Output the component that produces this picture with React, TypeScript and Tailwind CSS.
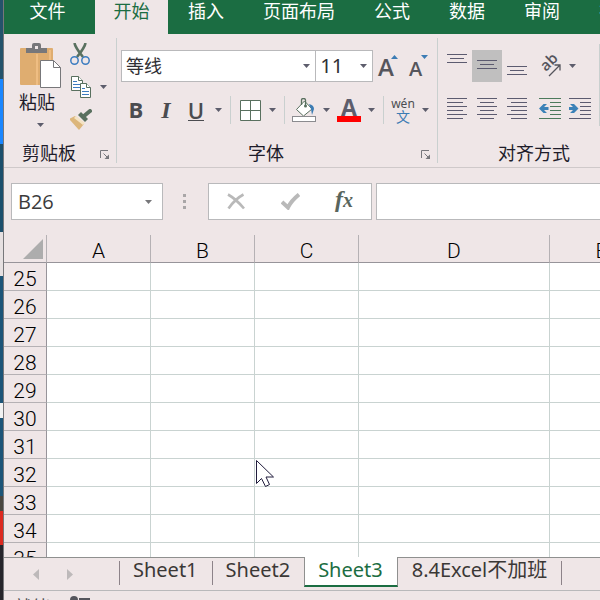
import React from "react";
import clsx from "clsx";

const MENU_TABS = ["文件", "开始", "插入", "页面布局", "公式", "数据", "审阅", "视图"];
const ACTIVE_MENU = "开始";

const COLUMNS = ["A", "B", "C", "D", "E"];
const ROWS = [25, 26, 27, 28, 29, 30, 31, 32, 33, 34, 35];

const SHEETS = ["Sheet1", "Sheet2", "Sheet3", "8.4Excel不加班"];
const ACTIVE_SHEET = "Sheet3";

const Caret: React.FC<{ className?: string }> = ({ className }) => (
  <svg width="7" height="4" viewBox="0 0 7 4" className={clsx("shrink-0", className ?? "text-[#5d5d6c]")}>
    <path d="M0 0h7L3.5 4z" fill="currentColor" />
  </svg>
);

const CaretButton: React.FC<{ label: string }> = ({ label }) => (
  <button type="button" aria-label={label} className="flex h-8 w-[15px] items-center justify-center">
    <Caret />
  </button>
);

type ToolButtonProps = {
  label: string;
  active?: boolean;
  className?: string;
  children: React.ReactNode;
};

const ToolButton: React.FC<ToolButtonProps> = ({ label, active, className, children }) => (
  <button
    type="button"
    aria-label={label}
    className={clsx(
      "flex h-8 w-[30px] shrink-0 items-center justify-center text-[#4b4c50]",
      active && "bg-[#c0bfbf]",
      className
    )}
  >
    {children}
  </button>
);

const Separator = () => <div className="mx-1 h-7 w-px shrink-0 bg-[#c9d0cf]" />;

const GroupFooter: React.FC<{ title: string }> = ({ title }) => (
  <div className="flex h-5 items-center">
    <span className="flex-1 pb-0.5 text-center text-lg leading-5 text-[#1e1c2a]">{title}</span>
    <button type="button" aria-label={`${title}设置`} className="flex w-[22px] justify-center pt-1">
      <svg width="10" height="10" viewBox="0 0 10 10" fill="none" stroke="#77777c">
        <path d="M.5 8V.5H8M3.5 3.5l4 4" />
        <path d="M9 4.500V9H4.500z" fill="#77777c" stroke="none" />
      </svg>
    </button>
  </div>
);

/* each line is [x, y, width] */
const LinesIcon: React.FC<{ lines: number[][] }> = ({ lines }) => (
  <svg width="20" height="32" viewBox="0 0 20 32" fill="#5c5b70">
    {lines.map(([x, y, w]) => (
      <rect key={y} x={x} y={y} width={w} height="1" />
    ))}
  </svg>
);

const VERTICAL_ALIGN = [
  { label: "顶端对齐", top: 4 },
  { label: "垂直居中", top: 10 },
  { label: "底端对齐", top: 16 },
];

const HORIZONTAL_ALIGN = [
  { label: "左对齐", short: 0 },
  { label: "居中", short: 3 },
  { label: "右对齐", short: 4 },
];

const IndentIcon: React.FC<{ increase?: boolean }> = ({ increase }) => (
  <svg width="22" height="32" viewBox="0 0 22 32" fill={increase ? "#5c5b70" : "#4d7a5c"}>
    <path d="M0 4h22v1H0zM11 8h11v1H11zM11 12h11v1H11zM11 16h11v1H11zM11 20h11v1H11zM0 24h22v1H0z" />
    {increase ? (
      <path d="M0 13h4L1 10h4l4.500 4.500L5 19H1l3-3H0z" fill="#3c82b8" />
    ) : (
      <path d="M9.500 13H5l3-3H4.500L0 14.500 4.500 19H8l-3-3h4.500z" fill="#3c82b8" />
    )}
  </svg>
);

const MenuTabs = () => (
  <nav className="flex h-[34px] shrink-0 overflow-hidden bg-[#1b6d42]">
    {MENU_TABS.map((tab, index) => (
      <button
        key={tab}
        type="button"
        className={clsx(
          "shrink-0 whitespace-nowrap pb-3.5 text-lg leading-5",
          index === 0 && "w-[91px] pr-1",
          index === 1 && "w-[73px]",
          index > 1 && "pl-5 pr-[19px]",
          tab === ACTIVE_MENU ? "bg-[#efe6e7] text-[#1b6d42]" : "text-white"
        )}
      >
        {tab}
      </button>
    ))}
  </nav>
);

const ClipboardGroup = () => (
  <section className="flex w-[113px] shrink-0 flex-col justify-between border-r border-[#c9d0cf]">
    <div className="flex pl-[15px] pt-[5px]">
      <button type="button" className="flex w-[43px] flex-col items-start text-lg leading-5 text-[#1e1c2a]">
        <svg width="43" height="46" viewBox="0 0 43 46">
          <rect x="1" y="5" width="33" height="37" rx="1" fill="#dfad70" />
          <path d="M17 11h2v31h-2zM30 7h2v10h-2z" fill="#efbd82" />
          <path d="M7 10V5h6V2q0-2 2-2h5q2 0 2 2v3h6v5z" fill="#77777a" />
          <rect x="16" y="3" width="3" height="3" fill="#efe6e7" />
          <path d="M21.500 17.500h13l7 7v20h-20z" fill="#fff" stroke="#77777a" />
          <path d="M34.500 17.500v7h7" fill="none" stroke="#77777a" />
        </svg>
        <span className="mt-0.5">粘贴</span>
        <span className="flex w-full justify-center pt-3">
          <Caret />
        </span>
      </button>
      <div className="ml-2 flex flex-col gap-[11px]">
        <button type="button" aria-label="剪切">
          <svg width="22" height="22" viewBox="0 0 22 22" fill="none">
            <path d="M4.500 0Q5 4 13 14M15.500 0Q15 4 7 14" stroke="#59705f" strokeWidth="2.600" />
            <circle cx="4.500" cy="17.500" r="3.700" stroke="#3c7cc0" strokeWidth="1.500" />
            <circle cx="15.500" cy="17.500" r="3.700" stroke="#3c7cc0" strokeWidth="1.500" />
          </svg>
        </button>
        <button type="button" aria-label="复制" className="flex items-center gap-2">
          <svg width="22" height="22" viewBox="0 0 22 22" fill="#fff" stroke="#59705f">
            <path d="M1.500.5h7l4 4v10h-11z" />
            <path d="M8.500.5v4h4" />
            <path d="M3 5.500h4M3 8.500h7M3 11.500h7" stroke="#3c7cc0" />
            <path d="M10.500 7.500h6l4 4v10h-10z" />
            <path d="M16.500 7.500v4h4" />
            <path d="M12 12.500h3M12 15.500h7M12 18.500h7" stroke="#3c7cc0" />
          </svg>
          <Caret />
        </button>
        <button type="button" aria-label="格式刷">
          <svg width="22" height="22" viewBox="0 0 22 22">
            <path d="M-1 10l6-3 9 8-5 6z" fill="#dcb67b" />
            <path d="M6 7l9 7-2 2-9-7z" fill="#f4e3c4" />
            <path d="M8 6l3-3 7 7-3 3z" fill="#59705f" />
            <path d="M14 7l6-5" stroke="#59705f" strokeWidth="4" strokeLinecap="round" />
          </svg>
        </button>
      </div>
    </div>
    <GroupFooter title="剪贴板" />
  </section>
);

const FontGroup = () => (
  <section className="flex w-[321px] shrink-0 flex-col justify-between border-r border-[#c9d0cf]">
    <div className="px-1 pt-3">
      <div className="flex h-8">
        <div className="relative w-[196px]">
          <select
            aria-label="字体"
            className="h-full w-full appearance-none border border-[#b9b9bb] bg-white pb-0.5 pl-1 text-lg leading-5 text-[#2f2f33]"
          >
            <option>等线</option>
          </select>
          <span className="pointer-events-none absolute inset-y-0 right-1.5 flex items-center">
            <Caret />
          </span>
        </div>
        <div className="relative -ml-px w-[58px]">
          <select
            aria-label="字号"
            className="h-full w-full appearance-none border border-[#b9b9bb] bg-white pl-1 font-['Noto_Sans'] text-xl leading-5 text-[#2f2f33]"
          >
            <option>11</option>
          </select>
          <span className="pointer-events-none absolute inset-y-0 right-1.5 flex items-center">
            <Caret />
          </span>
        </div>
        <ToolButton label="增大字号">
          <svg width="22" height="32" viewBox="0 0 22 32" className="font-['Open_Sans'] font-semibold">
            <text x="1" y="26" fontSize="24" fill="#55555c">A</text>
            <path d="M14 9l3.500-4L21 9z" fill="#3c7cb4" />
          </svg>
        </ToolButton>
        <ToolButton label="减小字号">
          <svg width="22" height="32" viewBox="0 0 22 32" className="font-['Open_Sans'] font-semibold">
            <text x="2" y="26" fontSize="20" fill="#55555c">A</text>
            <path d="M14 5h7l-3.500 4z" fill="#3c7cb4" />
          </svg>
        </ToolButton>
      </div>
      <div className="mt-3 flex items-center">
        <ToolButton label="加粗">
          <span className="pb-0.5 font-['Open_Sans'] text-[22px] font-bold leading-8">B</span>
        </ToolButton>
        <ToolButton label="倾斜">
          <span className="font-['Liberation_Serif'] text-2xl font-bold italic leading-8">I</span>
        </ToolButton>
        <ToolButton label="下划线">
          <span className="border-b border-[#4b4c50] font-['Open_Sans'] text-[22px] font-semibold leading-5">U</span>
        </ToolButton>
        <CaretButton label="下划线选项" />
        <Separator />
        <ToolButton label="边框">
          <svg width="21" height="21" viewBox="0 0 21 21" fill="#fff" stroke="#59705f">
            <path d="M.5.5h20v20H.5zM10.500.5v20M.5 10.500h20" />
          </svg>
        </ToolButton>
        <CaretButton label="边框选项" />
        <Separator />
        <ToolButton label="填充颜色">
          <svg width="24" height="24" viewBox="0 0 24 24" fill="none">
            <path d="M4.500 11.500L12.500 3l7.500 8-8.500 7z" fill="#fff" stroke="#59705f" />
            <path d="M9.500 7V2q0-1.500 2-1.500t2 1.500v6" stroke="#59705f" strokeWidth="1.300" />
            <circle cx="13.500" cy="8" r="1.500" fill="#59705f" />
            <path d="M17 6q5 1 5 5l-2 6-1-6z" fill="#3c7cb4" />
            <rect x=".5" y="18.500" width="23" height="5" fill="#fff" stroke="#8b8b8f" />
          </svg>
        </ToolButton>
        <CaretButton label="填充颜色选项" />
        <ToolButton label="字体颜色">
          <svg width="24" height="24" viewBox="0 0 24 24" className="font-['Open_Sans'] font-bold">
            <text x="12" y="18" fontSize="23" textAnchor="middle" fill="#5d5d6c">A</text>
            <rect y="18" width="24" height="6" fill="#f00" />
          </svg>
        </ToolButton>
        <CaretButton label="字体颜色选项" />
        <Separator />
        <ToolButton label="拼音" className="flex-col">
          <span className="font-['Noto_Sans'] text-xs leading-[13px]">wén</span>
          <span className="text-sm leading-[13px] text-[#3c7cb4]">文</span>
        </ToolButton>
        <CaretButton label="拼音选项" />
      </div>
    </div>
    <GroupFooter title="字体" />
  </section>
);

const AlignGroup = () => (
  <section className="flex w-[214px] shrink-0 flex-col justify-between">
    <div className="flex pl-1">
      <div className="pt-3">
        <div className="flex items-center">
          {VERTICAL_ALIGN.map(({ label, top }) => (
            <ToolButton key={label} label={label} active={top === 10}>
              <LinesIcon lines={[[0, top, 20], [3, top + 4, 14], [0, top + 8, 20]]} />
            </ToolButton>
          ))}
          <ToolButton label="方向" className="ml-[3px]">
            <svg width="22" height="22" viewBox="0 0 22 22" className="font-['Open_Sans'] font-semibold">
              <text transform="translate(7 17) rotate(-45)" fontSize="15" fill="#55555c">ab</text>
              <path d="M10 21L20.500 10.500M15.500 10h5.500v5.500" fill="none" stroke="#55555c" strokeWidth="1.300" />
            </svg>
          </ToolButton>
          <CaretButton label="方向选项" />
        </div>
        <div className="mt-3 flex items-center">
          {HORIZONTAL_ALIGN.map(({ label, short }) => (
            <ToolButton key={label} label={label}>
              <LinesIcon
                lines={[4, 8, 12, 16, 20, 24].map((y, i) =>
                  i % 2 === 0 ? [0, y, 20] : [short, y, short === 3 ? 14 : 16]
                )}
              />
            </ToolButton>
          ))}
          <ToolButton label="减少缩进量" className="ml-[3px]">
            <IndentIcon />
          </ToolButton>
          <ToolButton label="增加缩进量">
            <IndentIcon increase />
          </ToolButton>
        </div>
      </div>
      <div className="ml-1 mt-1.5 w-px bg-[#c9d0cf]" />
    </div>
    <GroupFooter title="对齐方式" />
  </section>
);

const FormulaBar = () => (
  <div className="flex shrink-0 items-center py-[15px] pl-[7px]">
    <div className="flex h-[37px] w-[152px] shrink-0 items-center border border-[#b9b9bb] bg-white pr-2.5">
      <input
        aria-label="名称框"
        defaultValue="B26"
        className="min-w-0 flex-1 bg-transparent pl-1.5 font-['Open_Sans'] text-xl text-[#3b3b3b] outline-none"
      />
      <button type="button" aria-label="名称列表" className="flex">
        <Caret className="text-[#77777a]" />
      </button>
    </div>
    <div className="ml-5 flex flex-col gap-[3px]">
      <i className="size-[3px] bg-[#a9a6a7]" />
      <i className="size-[3px] bg-[#a9a6a7]" />
      <i className="size-[3px] bg-[#a9a6a7]" />
    </div>
    <div className="ml-[22px] flex h-[37px] w-[164px] shrink-0 items-center border border-[#b9b9bb] bg-white">
      <button type="button" aria-label="取消" className="flex flex-1 justify-center">
        <svg width="18" height="17" viewBox="0 0 18 17" fill="none" stroke="#b9b9b9" strokeWidth="2.600">
          <path d="M1 1.500Q9 6 17 15.500M16.500 1.500Q8 6 1.500 15.500" />
        </svg>
      </button>
      <button type="button" aria-label="输入" className="flex flex-1 justify-center">
        <svg width="19" height="17" viewBox="0 0 19 17" fill="none" stroke="#b9b9b9" strokeWidth="4">
          <path d="M1 9l6 5.500Q10 8 18 1.500" />
        </svg>
      </button>
      <button
        type="button"
        aria-label="插入函数"
        className="flex-1 pb-1 font-['Liberation_Serif'] text-2xl font-bold italic leading-6 text-[#59655d]"
      >
        f<span className="text-xl">x</span>
      </button>
    </div>
    <input
      aria-label="编辑栏"
      className="ml-1 h-[37px] min-w-0 flex-1 border border-r-0 border-[#b9b9bb] bg-white px-2 outline-none"
    />
  </div>
);

const SheetGrid = () => (
  <div className="relative min-h-0 flex-1 overflow-hidden">
    <table className="w-[650px] table-fixed border-separate border-spacing-0 text-[21px] leading-[27px] text-black">
      <colgroup>
        <col className="w-[43px]" />
        <col className="w-[104px]" />
        <col className="w-[104px]" />
        <col className="w-[104px]" />
        <col className="w-[191px]" />
        <col className="w-[104px]" />
      </colgroup>
      <thead>
        <tr className="h-7">
          <th className="border-b border-r border-b-[#97949a] border-r-[#b5b1b4] p-0">
            <svg width="20" height="20" viewBox="0 0 20 20" className="ml-auto mr-[3px]">
              <path d="M20 0v20H0z" fill="#adadad" />
            </svg>
          </th>
          {COLUMNS.map((col) => (
            <th
              key={col}
              className="border-b border-r border-b-[#97949a] border-r-[#b5b1b4] p-0 pt-[5px] font-['Roboto'] font-light leading-[22px]"
            >
              {col}
            </th>
          ))}
        </tr>
      </thead>
      <tbody>
        {ROWS.map((row) => (
          <tr key={row} className="h-7">
            <th className="border-b border-r border-b-[#b5b1b4] border-r-[#97949a] p-0 pt-[5px] font-['Roboto'] font-light leading-[22px]">
              {row}
            </th>
            {COLUMNS.map((col) => (
              <td key={col} className="border-b border-r border-[#c9d3d1] bg-white p-0" />
            ))}
          </tr>
        ))}
      </tbody>
    </table>
    <svg width="19" height="29" viewBox="0 0 19 29" className="absolute left-[252px] top-[225px]">
      <path d="M.5.5v23l5-5 4 8 4-2-3.500-7.500h7.500z" fill="#fff" stroke="#201c3c" />
    </svg>
  </div>
);

const SheetTabs = () => (
  <div className="flex h-[33px] shrink-0 items-start">
    <div className="flex h-full w-[115px] shrink-0 items-center gap-7 border-t border-[#8f908f] pl-[29px] text-[#bdb9ba]">
      <button type="button" aria-label="上一个工作表">
        <svg width="6" height="11" viewBox="0 0 6 11">
          <path d="M6 0v11L0 5.500z" fill="currentColor" />
        </svg>
      </button>
      <button type="button" aria-label="下一个工作表">
        <svg width="6" height="11" viewBox="0 0 6 11">
          <path d="M0 0v11l6-5.500z" fill="currentColor" />
        </svg>
      </button>
    </div>
    {SHEETS.map((sheet, index) => {
      const active = sheet === ACTIVE_SHEET;
      const afterActive = SHEETS[index - 1] === ACTIVE_SHEET;
      return (
        <div key={sheet} className={clsx("flex shrink-0", active ? "bg-white" : "border-t border-[#8f908f]")}>
          {!active && !afterActive && <div className="mt-[3px] h-6 w-px bg-[#8d8389]" />}
          <button
            type="button"
            className={clsx(
              "h-[30px] whitespace-nowrap pr-3.5 font-['Noto_Sans','Noto_Sans_CJK_SC',sans-serif] text-xl leading-6",
              afterActive ? "pl-3.5" : "pl-[13px]",
              active
                ? "border-x border-b-2 border-x-[#8f908f] border-b-[#1b6d42] pb-0.5 text-[#1b6d42]"
                : "pb-1.5 text-[#3b3836]"
            )}
          >
            {sheet}
          </button>
        </div>
      );
    })}
    <div className="flex-1 border-t border-[#8f908f] pt-[3px]">
      <div className="h-6 w-px bg-[#8d8389]" />
    </div>
  </div>
);

const StatusBar = () => (
  <footer className="flex h-2.5 shrink-0 items-start gap-5 overflow-hidden border-t border-[#b9b9bb] pl-2.5 pt-[5px]">
    <span className="text-lg leading-5 text-[#4b4c50]">就绪</span>
    <svg width="20" height="12" viewBox="0 0 20 12" className="shrink-0" fill="#55555c">
      <circle cx="4" cy="4" r="4" />
      <path d="M9 2h11v10H9z" />
    </svg>
  </footer>
);

/* sliver of the desktop that stays visible beside the window */
const DesktopEdge = () => (
  <div className="flex w-1 shrink-0 flex-col border-r border-[#77777a]">
    <div className="grow-[79] bg-[#24536b]" />
    <div className="grow-[65] bg-[#1a86ff]" />
    <div className="grow-[88] bg-[#1c4f6c]" />
    <div className="grow-[44] bg-[#e6e0e1]" />
    <div className="grow-[127] bg-[#1d5578]" />
    <div className="grow-[15] bg-[#f2f2f2]" />
    <div className="grow-[78] bg-[#1d5578]" />
    <div className="grow-[15] bg-[#4a4640]" />
    <div className="grow-[34] bg-[#dc2a20]" />
    <div className="grow-[55] bg-[#26252b]" />
  </div>
);

export default function App() {
  return (
    <div className="flex h-screen overflow-hidden bg-[#efe6e7] font-['Noto_Sans_CJK_SC',sans-serif]">
      <DesktopEdge />
      <main className="flex min-w-0 flex-1 flex-col">
        <MenuTabs />
        <div className="flex h-[134px] shrink-0 overflow-hidden border-b border-[#cfc9ca] py-1">
          <ClipboardGroup />
          <FontGroup />
          <AlignGroup />
        </div>
        <FormulaBar />
        <SheetGrid />
        <SheetTabs />
        <StatusBar />
      </main>
    </div>
  );
}
